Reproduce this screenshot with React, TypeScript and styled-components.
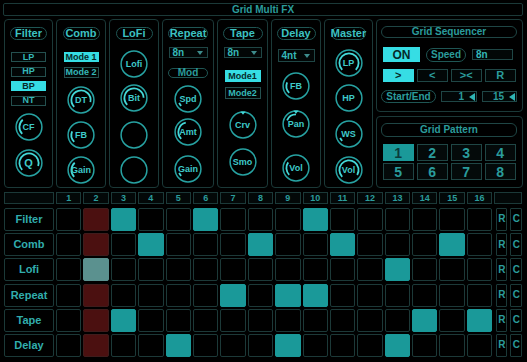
import React from 'react';
import styled, { createGlobalStyle } from 'styled-components';

const COL = {
  border: '#1b3938',
  teal: '#35b8b8',
  tealDim: '#2b9c9c',
  cyan: '#36dde4',
  pill: '#1f5654',
  box: '#1f4645',
  on: '#1a9999',
  play: '#4b1010',
  playOn: '#5b918f',
  ring: '#27a2a2',
  arc: '#44d8d8',
  dark: '#062a2a',
};

const GlobalStyle = createGlobalStyle`
  html, body { margin: 0; padding: 0; background: #000; }
  body { font-family: "Liberation Sans", Arial, sans-serif; }
  #root { width: 527px; height: 362px; overflow: hidden; }
  *, *::before, *::after { box-sizing: border-box; }
`;

const Root = styled.div`
  width: 527px;
  height: 362px;
  background: #000;
  padding: 3px 4px 0 3px;
  display: flex;
  flex-direction: column;
`;

const TitleBar = styled.div`
  height: 13px;
  border: 1px solid ${COL.border};
  border-radius: 2px;
  display: flex;
  align-items: center;
  justify-content: center;
  color: ${COL.tealDim};
  font-weight: bold;
  font-size: 10px;
  line-height: 1;
`;

const TopArea = styled.div`
  display: flex;
  gap: 3px;
  margin-top: 3px;
  padding-left: 1px;
  height: 169px;
`;

const Module = styled.div<{ $w: number }>`
  width: ${(p) => p.$w}px;
  flex: none;
  height: 100%;
  border: 1px solid ${COL.border};
  border-radius: 4px;
  display: flex;
  flex-direction: column;
  align-items: center;
`;

const Heading = styled.div<{ $w: number }>`
  margin-top: 7px;
  width: ${(p) => p.$w}px;
  height: 13px;
  border: 1.5px solid ${COL.pill};
  border-radius: 7px;
  display: flex;
  align-items: center;
  justify-content: center;
  color: #3cc2c2;
  font-weight: bold;
  font-size: 11px;
  line-height: 1;
  white-space: nowrap;
`;

const ButtonStack = styled.div<{ $mt: number; $gap: number }>`
  margin-top: ${(p) => p.$mt}px;
  display: flex;
  flex-direction: column;
  gap: ${(p) => p.$gap}px;
`;

const ModeBtn = styled.div<{ $w: number; $h: number; $active?: boolean; $mt?: number }>`
  margin-top: ${(p) => p.$mt ?? 0}px;
  width: ${(p) => p.$w}px;
  height: ${(p) => p.$h}px;
  border: 1px solid ${(p) => (p.$active ? COL.cyan : '#24504f')};
  background: ${(p) => (p.$active ? COL.cyan : '#020606')};
  color: ${(p) => (p.$active ? COL.dark : COL.teal)};
  display: flex;
  align-items: center;
  justify-content: center;
  font-weight: bold;
  font-size: 9px;
  line-height: 1;
  white-space: nowrap;
`;

const Dropdown = styled.div<{ $w: number; $h: number; $mt: number }>`
  margin-top: ${(p) => p.$mt}px;
  width: ${(p) => p.$w}px;
  height: ${(p) => p.$h}px;
  border: 1px solid ${COL.box};
  background: #020606;
  display: flex;
  align-items: center;
  justify-content: space-between;
  padding: 0 4px 0 3px;
  color: ${COL.teal};
  font-weight: bold;
  font-size: 10px;
  line-height: 1;
`;

const DownArrow = styled.span`
  width: 0;
  height: 0;
  border-left: 3px solid transparent;
  border-right: 3px solid transparent;
  border-top: 4px solid #3e8c8c;
`;

const SmallPill = styled.div<{ $w: number; $h: number; $mt?: number; $size?: number }>`
  margin-top: ${(p) => p.$mt ?? 0}px;
  width: ${(p) => p.$w}px;
  height: ${(p) => p.$h}px;
  flex: none;
  border: 1.2px solid ${COL.pill};
  border-radius: ${(p) => p.$h / 2}px;
  display: flex;
  align-items: center;
  justify-content: center;
  color: ${COL.tealDim};
  font-weight: bold;
  font-size: ${(p) => p.$size ?? 10}px;
  line-height: 1;
  white-space: nowrap;
`;

const KnobBox = styled.div<{ $mt: number }>`
  margin-top: ${(p) => p.$mt}px;
  width: 28px;
  height: 28px;
  display: grid;
  place-items: center;
  & > * {
    grid-area: 1 / 1;
  }
`;

const KnobLabel = styled.span<{ $size: number }>`
  color: #3ecaca;
  font-weight: bold;
  font-size: ${(p) => p.$size}px;
  line-height: 1;
  white-space: nowrap;
`;

const polar = (cx: number, cy: number, r: number, deg: number) => {
  const a = (deg * Math.PI) / 180;
  return [cx + r * Math.sin(a), cy - r * Math.cos(a)];
};

const arcPath = (from: number, to: number, r: number) => {
  const a = Math.min(from, to);
  const b = Math.max(from, to);
  const [x1, y1] = polar(14, 14, r, a);
  const [x2, y2] = polar(14, 14, r, b);
  const large = b - a > 180 ? 1 : 0;
  return `M ${x1.toFixed(2)} ${y1.toFixed(2)} A ${r} ${r} 0 ${large} 1 ${x2.toFixed(2)} ${y2.toFixed(2)}`;
};

type KnobProps = { label?: string; value?: number; bipolar?: boolean; mt: number; size?: number };

const Knob = ({ label, value = 0, bipolar, mt, size = 9 }: KnobProps) => {
  let path: string | null = null;
  if (bipolar) {
    if (Math.abs(value) > 0.01) path = arcPath(0, 135 * value, 9.6);
  } else if (value > 0.01) {
    path = arcPath(-135, -135 + 270 * value, 9.6);
  }
  return (
    <KnobBox $mt={mt}>
      <svg width="28" height="28" viewBox="0 0 28 28">
        <circle cx="14" cy="14" r="12.9" fill="none" stroke={COL.ring} strokeWidth="1.5" />
        {path && <path d={path} fill="none" stroke={COL.arc} strokeWidth="1.8" />}
        {bipolar && <polygon points="11.5,0.6 16.5,0.6 14,3.8" fill={COL.arc} />}
      </svg>
      {label && <KnobLabel $size={size}>{label}</KnobLabel>}
    </KnobBox>
  );
};

/* right side */
const RightCol = styled.div`
  width: 147px;
  flex: none;
  display: flex;
  flex-direction: column;
  gap: 4px;
`;

const SidePanel = styled.div<{ $h: number }>`
  height: ${(p) => p.$h}px;
  border: 1px solid ${COL.border};
  border-radius: 4px;
  padding: 6px 5px 0 4px;
  display: flex;
  flex-direction: column;
`;

const PanelTitle = styled.div<{ $h: number }>`
  width: 136px;
  height: ${(p) => p.$h}px;
  border: 1px solid ${COL.box};
  border-radius: 6px;
  display: flex;
  align-items: center;
  justify-content: center;
  color: ${COL.tealDim};
  font-weight: bold;
  font-size: 10px;
  line-height: 1;
`;

const SeqRow = styled.div<{ $mt: number; $gap: number; $pl: number }>`
  margin-top: ${(p) => p.$mt}px;
  padding-left: ${(p) => p.$pl}px;
  display: flex;
  align-items: center;
  gap: ${(p) => p.$gap}px;
`;

const SeqBtn = styled.div<{ $w: number; $h: number; $active?: boolean; $size?: number }>`
  width: ${(p) => p.$w}px;
  height: ${(p) => p.$h}px;
  flex: none;
  border: 1px solid ${(p) => (p.$active ? COL.cyan : COL.box)};
  background: ${(p) => (p.$active ? COL.cyan : '#020707')};
  color: ${(p) => (p.$active ? COL.dark : COL.tealDim)};
  display: flex;
  align-items: center;
  justify-content: center;
  font-weight: bold;
  font-size: ${(p) => p.$size ?? 11}px;
  line-height: 1;
`;

const ValueBox = styled.div<{ $w: number }>`
  width: ${(p) => p.$w}px;
  height: 11px;
  flex: none;
  border: 1px solid ${COL.box};
  background: #020707;
  display: flex;
  align-items: center;
  color: ${COL.teal};
  font-weight: bold;
  font-size: 10px;
  line-height: 1;
  padding-left: 3px;
`;

const NumBox = styled.div<{ $w: number }>`
  width: ${(p) => p.$w}px;
  height: 11px;
  flex: none;
  border: 1px solid ${COL.box};
  background: #020707;
  display: flex;
  align-items: center;
  justify-content: flex-end;
  gap: 5px;
  padding-right: 1px;
  color: ${COL.tealDim};
  font-weight: bold;
  font-size: 10px;
  line-height: 1;
`;

const LeftTri = styled.span`
  width: 0;
  height: 0;
  border-top: 4.5px solid transparent;
  border-bottom: 4.5px solid transparent;
  border-right: 6px solid #2fb4b4;
`;

const PatternGrid = styled.div`
  margin-top: 7px;
  padding-left: 2px;
  display: grid;
  grid-template-columns: repeat(4, 30.5px);
  grid-auto-rows: 17px;
  column-gap: 3.5px;
  row-gap: 2px;
`;

const PatternBtn = styled.div<{ $active?: boolean }>`
  border: 1px solid ${(p) => (p.$active ? COL.on : COL.box)};
  background: ${(p) => (p.$active ? COL.on : '#040a0a')};
  color: ${(p) => (p.$active ? '#0a3c3c' : '#2a9c9c')};
  display: flex;
  align-items: center;
  justify-content: center;
  font-weight: bold;
  font-size: 14px;
  line-height: 1;
`;

/* step grid */
const StepGrid = styled.div`
  margin-top: 4px;
  margin-left: 1px;
  display: grid;
  grid-template-columns: 50px repeat(16, 25.4px) 28px;
  grid-template-rows: 13.8px repeat(6, 23px);
  column-gap: 2px;
  row-gap: 2.2px;
`;

const HeadCell = styled.div`
  align-self: start;
  height: 12px;
  border: 1px solid ${COL.border};
  background: #030808;
  display: flex;
  align-items: center;
  justify-content: center;
  color: ${COL.tealDim};
  font-weight: bold;
  font-size: 9px;
  line-height: 1;
`;

const LabelCell = styled.div`
  border: 1px solid ${COL.border};
  border-radius: 2px;
  display: flex;
  align-items: center;
  justify-content: center;
  color: #31adad;
  font-weight: bold;
  font-size: 11px;
  line-height: 1;
`;

type StepState = 'off' | 'on' | 'play' | 'playOn';
const stepBg: Record<StepState, string> = { off: '#000', on: COL.on, play: COL.play, playOn: COL.playOn };
const stepBorder: Record<StepState, string> = { off: '#1c3938', on: COL.on, play: '#3f1c1c', playOn: COL.playOn };

const StepCell = styled.div<{ $state: StepState }>`
  border: 1px solid ${(p) => stepBorder[p.$state]};
  border-radius: 2px;
  background: ${(p) => stepBg[p.$state]};
`;

const RCGroup = styled.div`
  display: flex;
  justify-content: flex-end;
  gap: 3px;
`;

const RCBtn = styled.div<{ $w: number }>`
  width: ${(p) => p.$w}px;
  border: 1px solid ${COL.border};
  border-radius: 1px;
  display: flex;
  align-items: center;
  justify-content: center;
  color: ${COL.tealDim};
  font-weight: bold;
  font-size: 10px;
  line-height: 1;
`;

const ROWS: [string, number[]][] = [
  ['Filter', [3, 6, 10]],
  ['Comb', [4, 8, 11, 15]],
  ['Lofi', [2, 13]],
  ['Repeat', [7, 9, 10]],
  ['Tape', [3, 14, 16]],
  ['Delay', [5, 9, 13]],
];
const PLAY = 2;
const STEPS = Array.from({ length: 16 }, (_, i) => i + 1);

export default function App() {
  return (
    <Root>
      <GlobalStyle />
      <TitleBar>Grid Multi FX</TitleBar>
      <TopArea>
        <Module $w={49}>
          <Heading $w={37}>Filter</Heading>
          <ButtonStack $mt={12} $gap={4.5}>
            <ModeBtn $w={35} $h={10}>LP</ModeBtn>
            <ModeBtn $w={35} $h={10}>HP</ModeBtn>
            <ModeBtn $w={35} $h={10} $active>BP</ModeBtn>
            <ModeBtn $w={35} $h={10}>NT</ModeBtn>
          </ButtonStack>
          <Knob label="CF" value={0.35} mt={7.5} />
          <Knob label="Q" value={0.9} mt={8} size={11} />
        </Module>
        <Module $w={50}>
          <Heading $w={37}>Comb</Heading>
          <ButtonStack $mt={12} $gap={4.5}>
            <ModeBtn $w={35} $h={10} $active>Mode 1</ModeBtn>
            <ModeBtn $w={35} $h={11}>Mode 2</ModeBtn>
          </ButtonStack>
          <Knob label="DT" value={0.88} mt={8.5} />
          <Knob label="FB" value={0.25} mt={7} />
          <Knob label="Gain" value={0.35} mt={7} />
        </Module>
        <Module $w={50}>
          <Heading $w={37}>LoFi</Heading>
          <Knob label="Lofi" value={0} mt={10} />
          <Knob label="Bit" value={0.83} mt={6} />
          <Knob mt={9} />
          <Knob mt={7} />
        </Module>
        <Module $w={52}>
          <Heading $w={40}>Repeat</Heading>
          <Dropdown $w={39} $h={11} $mt={7}>
            8n<DownArrow />
          </Dropdown>
          <SmallPill $w={40} $h={10} $mt={10}>Mod</SmallPill>
          <Knob label="Spd" value={0.08} mt={7} />
          <Knob label="Amt" value={0.45} mt={5} />
          <Knob label="Gain" value={0.08} mt={9} />
        </Module>
        <Module $w={51}>
          <Heading $w={40}>Tape</Heading>
          <Dropdown $w={38} $h={11} $mt={7}>
            8n<DownArrow />
          </Dropdown>
          <ModeBtn $w={36} $h={12} $mt={12} $active>Mode1</ModeBtn>
          <ModeBtn $w={36} $h={12} $mt={5}>Mode2</ModeBtn>
          <Knob label="Crv" value={0} bipolar mt={12} />
          <Knob label="Smo" value={0} mt={9} />
        </Module>
        <Module $w={50}>
          <Heading $w={39}>Delay</Heading>
          <Dropdown $w={37} $h={13} $mt={9}>
            4nt<DownArrow />
          </Dropdown>
          <Knob label="FB" value={0.25} mt={10} />
          <Knob label="Pan" value={-0.5} bipolar mt={10} />
          <Knob label="Vol" value={0.3} mt={16} />
        </Module>
        <Module $w={49}>
          <Heading $w={35}>Master</Heading>
          <Knob label="LP" value={1} mt={9} />
          <Knob label="HP" value={0} mt={7} />
          <Knob label="WS" value={0.08} mt={8} />
          <Knob label="Vol" value={0.95} mt={8} />
        </Module>
        <RightCol>
          <SidePanel $h={93}>
            <PanelTitle $h={12}>Grid Sequencer</PanelTitle>
            <SeqRow $mt={9} $gap={6} $pl={2}>
              <SeqBtn $w={37} $h={15} $active $size={12}>ON</SeqBtn>
              <SmallPill $w={40} $h={14} $size={10}>Speed</SmallPill>
              <ValueBox $w={41}>8n</ValueBox>
            </SeqRow>
            <SeqRow $mt={7} $gap={3.5} $pl={2}>
              <SeqBtn $w={30.5} $h={13} $active>&gt;</SeqBtn>
              <SeqBtn $w={30.5} $h={13}>&lt;</SeqBtn>
              <SeqBtn $w={30.5} $h={13}>&gt;&lt;</SeqBtn>
              <SeqBtn $w={30.5} $h={13}>R</SeqBtn>
            </SeqRow>
            <SeqRow $mt={8} $gap={5} $pl={0}>
              <SmallPill $w={55} $h={13} $size={10}>Start/End</SmallPill>
              <NumBox $w={36}>
                1<LeftTri />
              </NumBox>
              <NumBox $w={35}>
                15<LeftTri />
              </NumBox>
            </SeqRow>
          </SidePanel>
          <SidePanel $h={72}>
            <PanelTitle $h={14}>Grid Pattern</PanelTitle>
            <PatternGrid>
              {[1, 2, 3, 4, 5, 6, 7, 8].map((n) => (
                <PatternBtn key={n} $active={n === 1}>
                  {n}
                </PatternBtn>
              ))}
            </PatternGrid>
          </SidePanel>
        </RightCol>
      </TopArea>
      <StepGrid>
        <HeadCell />
        {STEPS.map((s) => (
          <HeadCell key={s}>{s}</HeadCell>
        ))}
        <HeadCell />
        {ROWS.map(([name, on]) => (
          <React.Fragment key={name}>
            <LabelCell>{name}</LabelCell>
            {STEPS.map((s) => {
              const isOn = on.includes(s);
              const st: StepState = s === PLAY ? (isOn ? 'playOn' : 'play') : isOn ? 'on' : 'off';
              return <StepCell key={s} $state={st} />;
            })}
            <RCGroup>
              <RCBtn $w={11}>R</RCBtn>
              <RCBtn $w={12}>C</RCBtn>
            </RCGroup>
          </React.Fragment>
        ))}
      </StepGrid>
    </Root>
  );
}
